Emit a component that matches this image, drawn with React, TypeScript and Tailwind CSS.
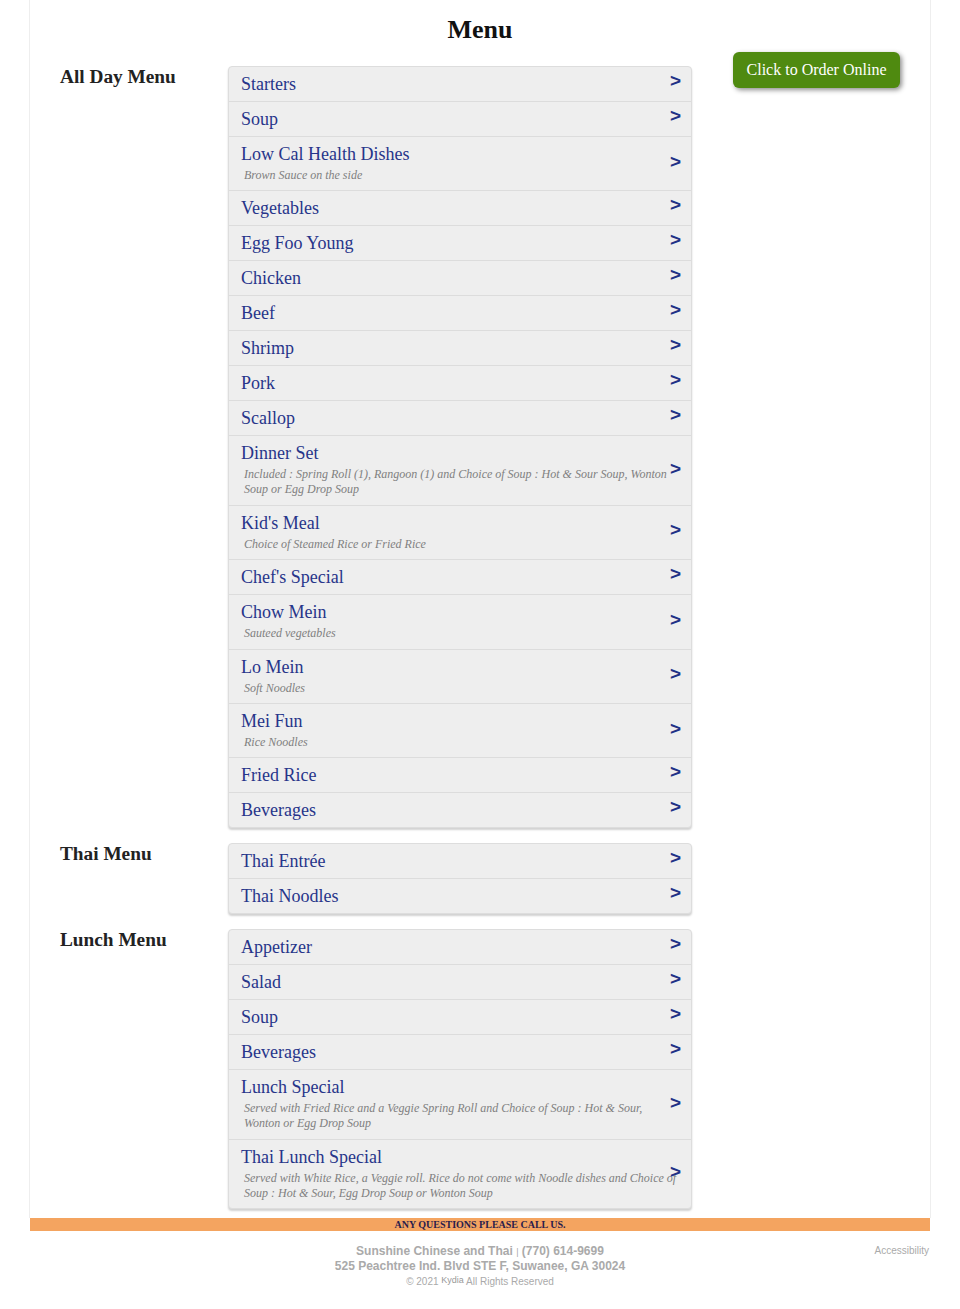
import React from "react";

type Item = { name: string; note?: string };
type Section = { title: string; items: Item[] };

const sections: Section[] = [
    {
        title: "All Day Menu",
        items: [
            { name: "Starters" },
            { name: "Soup" },
            { name: "Low Cal Health Dishes", note: "Brown Sauce on the side" },
            { name: "Vegetables" },
            { name: "Egg Foo Young" },
            { name: "Chicken" },
            { name: "Beef" },
            { name: "Shrimp" },
            { name: "Pork" },
            { name: "Scallop" },
            {
                name: "Dinner Set",
                note: "Included : Spring Roll (1), Rangoon (1) and Choice of Soup : Hot & Sour Soup, Wonton Soup or Egg Drop Soup",
            },
            { name: "Kid's Meal", note: "Choice of Steamed Rice or Fried Rice" },
            { name: "Chef's Special" },
            { name: "Chow Mein", note: "Sauteed vegetables" },
            { name: "Lo Mein", note: "Soft Noodles" },
            { name: "Mei Fun", note: "Rice Noodles" },
            { name: "Fried Rice" },
            { name: "Beverages" },
        ],
    },
    {
        title: "Thai Menu",
        items: [{ name: "Thai Entrée" }, { name: "Thai Noodles" }],
    },
    {
        title: "Lunch Menu",
        items: [
            { name: "Appetizer" },
            { name: "Salad" },
            { name: "Soup" },
            { name: "Beverages" },
            {
                name: "Lunch Special",
                note: "Served with Fried Rice and a Veggie Spring Roll and Choice of Soup : Hot & Sour, Wonton or Egg Drop Soup",
            },
            {
                name: "Thai Lunch Special",
                note: "Served with White Rice, a Veggie roll. Rice do not come with Noodle dishes and Choice of Soup : Hot & Sour, Egg Drop Soup or Wonton Soup",
            },
        ],
    },
];

function MenuRow({ item, last }: { item: Item; last: boolean }) {
    return (
        <div
            className={`relative pl-[12px] pr-[10px] pt-[6px] ${
                item.note ? "pb-[7.4px]" : "pb-[6px]"
            } ${last ? "" : "border-b border-[#dcdcdc]"}`}
        >
            <div className="text-[18px] leading-[22px] text-[#27358a]">
                {item.name}
            </div>
            {item.note && (
                <div className="mt-[3px] pl-[3px] pr-[2px] text-[12px] leading-[15px] italic text-[#808080]">
                    {item.note}
                </div>
            )}
            {/* arrow sits over the text, just above the middle */}
            <span
                className={`absolute right-[10px] font-['Liberation_Sans',sans-serif] font-bold text-[19px] leading-none text-[#1f3186] ${
                    item.note ? "top-1/2 -translate-y-[65%]" : "top-[4px]"
                }`}
            >
                &gt;
            </span>
        </div>
    );
}

function MenuSection({ section }: { section: Section }) {
    return (
        <div className="flex">
            <h2 className="w-[168px] shrink-0 text-[19.3px] leading-[22px] font-bold text-[#222]">
                {section.title}
            </h2>
            <div className="w-[464px] rounded-[4px] border border-[#dddddd] bg-[#eeeeee] shadow-[0_2px_2px_rgba(0,0,0,0.18)]">
                {section.items.map((item, i) => (
                    <MenuRow
                        key={section.title + item.name}
                        item={item}
                        last={i === section.items.length - 1}
                    />
                ))}
            </div>
        </div>
    );
}

export default function App() {
    return (
        <div className="min-h-[1309px] bg-white font-['Liberation_Serif',serif]">
            <div className="mx-[29px] border-x border-[#eeeeee] pb-[9px]">
                <h1 className="pt-[15px] text-center text-[26px] leading-[30px] font-bold text-[#111]">
                    Menu
                </h1>
                <div className="flex pl-[30px]">
                    <div className="mt-[21px] flex flex-col gap-[15px]">
                        {sections.map((s) => (
                            <MenuSection key={s.title} section={s} />
                        ))}
                    </div>
                    <div className="ml-[41px] mt-[7px]">
                        <button className="h-[36px] w-[167px] rounded-[6px] bg-[#4f8a10] text-[16px] text-white shadow-[2px_2px_5px_rgba(0,0,0,0.45)]">
                            Click to Order Online
                        </button>
                    </div>
                </div>
            </div>
            <div className="mx-[30px] h-[13px] bg-[#f4a460] text-center text-[10px] leading-[13px] font-bold text-[#2a1c4c]">
                ANY QUESTIONS PLEASE CALL US.
            </div>
            <footer className="relative mx-[30px] pt-[13px] text-center font-['Liberation_Sans',sans-serif] text-[#aaaaaa]">
                <div className="text-[12px] leading-[14px] font-bold">
                    Sunshine Chinese and Thai{" "}
                    <span className="text-[9px] font-normal">|</span> (770)
                    614-9699
                </div>
                <div className="text-[12px] leading-[14px] font-bold">
                    525 Peachtree Ind. Blvd STE F, Suwanee, GA 30024
                </div>
                <div className="mt-[2px] text-[10px] leading-[14px]">
                    © 2021{" "}
                    <span className="relative -top-[2px] text-[9px] text-[#999]">
                        Kydia
                    </span>{" "}
                    All Rights Reserved
                </div>
                <a className="absolute right-[1px] top-[12px] text-[10px] text-[#aaaaaa]">
                    Accessibility
                </a>
            </footer>
        </div>
    );
}
